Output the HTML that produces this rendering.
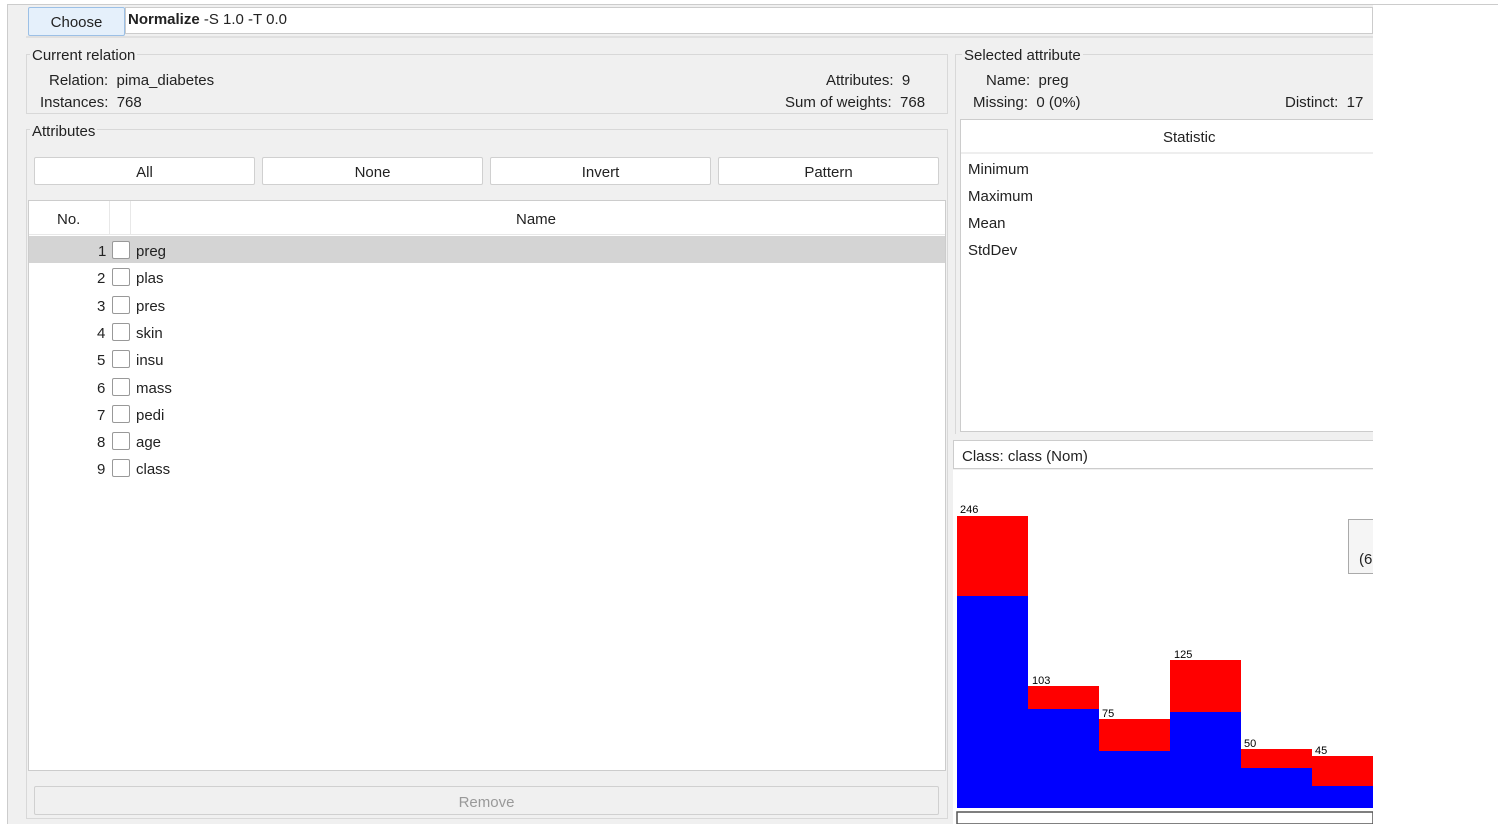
<!DOCTYPE html>
<html><head><style>
*{margin:0;padding:0;box-sizing:border-box}
body{width:1498px;height:824px;background:#fff;position:relative;overflow:hidden;font-family:"Liberation Sans",sans-serif;font-size:15px;color:#222}
.a{position:absolute}
.t{position:absolute;white-space:nowrap;transform:translateY(2px)}
.btn{position:absolute;background:#fff;border:1px solid #d0d0d0;border-radius:2px;text-align:center;line-height:29px}
.leg{position:absolute;border-top:1px solid #d8d8d8}
</style></head><body>
<div class="a" style="left:7px;top:4px;width:1366px;height:820px;background:#f0f0f0;border-left:1px solid #ccc;border-top:1px solid #ccc"></div>
<div class="a" style="left:1373px;top:4px;width:125px;height:1px;background:#ccc"></div>
<div class="btn" style="left:28px;top:7px;width:97px;height:29px;background:#e5f0fb;border-color:#9cc0e6;line-height:30px">Choose</div>
<div class="a" style="left:125px;top:7px;width:1248px;height:27px;background:#fff;border:1px solid #ccc"></div>
<div class="t" style="left:128px;top:9px;font-size:15px"><b>Normalize</b> -S 1.0 -T 0.0</div>
<div class="a" style="left:26px;top:36px;width:1347px;height:2px;background:#e0e0e0"></div>
<!-- current relation -->
<div class="leg" style="left:26px;top:54px;width:922px"></div>
<div class="a" style="left:26px;top:54px;width:922px;height:60px;border:1px solid #d8d8d8;border-top:none"></div>
<div class="t" style="left:30px;top:45px;background:#f0f0f0;padding:0 2px">Current relation</div>
<div class="t" style="left:49px;top:70px">Relation:&nbsp; pima_diabetes</div>
<div class="t" style="left:40px;top:92px">Instances:&nbsp; 768</div>
<div class="t" style="left:826px;top:70px">Attributes:&nbsp; 9</div>
<div class="t" style="left:785px;top:92px">Sum of weights:&nbsp; 768</div>
<!-- attributes -->
<div class="a" style="left:26px;top:129px;width:922px;height:690px;border:1px solid #d8d8d8"></div>
<div class="t" style="left:30px;top:121px;background:#f0f0f0;padding:0 2px">Attributes</div>
<div class="btn" style="left:34px;top:157px;width:221px;height:28px">All</div>
<div class="btn" style="left:262px;top:157px;width:221px;height:28px">None</div>
<div class="btn" style="left:490px;top:157px;width:221px;height:28px">Invert</div>
<div class="btn" style="left:718px;top:157px;width:221px;height:28px">Pattern</div>
<div class="a" style="left:28px;top:200px;width:918px;height:571px;background:#fff;border:1px solid #ccc"></div>
<div class="a" style="left:29px;top:234px;width:916px;height:1px;background:#e8e8e8"></div>
<div class="a" style="left:109px;top:201px;width:1px;height:33px;background:#e8e8e8"></div>
<div class="a" style="left:130px;top:201px;width:1px;height:33px;background:#e8e8e8"></div>
<div class="t" style="left:57px;top:209px">No.</div>
<div class="t" style="left:516px;top:209px">Name</div>
<div class="a" style="left:29px;top:236px;width:916px;height:27px;background:#d4d4d4"></div>
<div id="rows"></div>
<div class="btn" style="left:34px;top:786px;width:905px;height:29px;background:#f0f0f0;color:#999;line-height:31px">Remove</div>
<!-- selected attribute -->
<div class="leg" style="left:955px;top:54px;width:418px"></div>
<div class="a" style="left:955px;top:54px;width:1px;height:380px;background:#d8d8d8"></div>
<div class="t" style="left:962px;top:45px;background:#f0f0f0;padding:0 2px">Selected attribute</div>
<div class="t" style="left:986px;top:70px">Name:&nbsp; preg</div>
<div class="t" style="left:973px;top:92px">Missing:&nbsp; 0 (0%)</div>
<div class="t" style="left:1285px;top:92px">Distinct:&nbsp; 17</div>
<div class="a" style="left:960px;top:119px;width:413px;height:313px;background:#fff;border:1px solid #ccc;border-right:none"></div>
<div class="a" style="left:961px;top:152px;width:412px;height:2px;background:#eee"></div>
<div class="t" style="left:1163px;top:127px">Statistic</div>
<div class="t" style="left:968px;top:159px">Minimum</div>
<div class="t" style="left:968px;top:186px">Maximum</div>
<div class="t" style="left:968px;top:213px">Mean</div>
<div class="t" style="left:968px;top:240px">StdDev</div>
<!-- class -->
<div class="a" style="left:953px;top:440px;width:420px;height:29px;background:#fff;border:1px solid #ccc;border-right:none"></div>
<div class="t" style="left:962px;top:446px">Class: class (Nom)</div>
<div class="a" style="left:953px;top:470px;width:420px;height:354px;background:#fff"></div>
<div class="a" style="left:1348px;top:519px;width:25px;height:55px;background:#f5f5f5;border:1px solid #aaa;border-right:none"></div>
<div class="t" style="left:1359px;top:549px">(6</div>
<svg class="a" style="left:0;top:0" width="1373" height="824">
<g font-family="Liberation Sans" font-size="11" fill="#000">
<rect x="957" y="516" width="71" height="80" fill="#f00"/><rect x="957" y="596" width="71" height="212" fill="#00f"/>
<rect x="1028" y="686" width="71" height="23" fill="#f00"/><rect x="1028" y="709" width="71" height="99" fill="#00f"/>
<rect x="1099" y="719" width="71" height="32" fill="#f00"/><rect x="1099" y="751" width="71" height="57" fill="#00f"/>
<rect x="1170" y="660" width="71" height="52" fill="#f00"/><rect x="1170" y="712" width="71" height="96" fill="#00f"/>
<rect x="1241" y="749" width="71" height="19" fill="#f00"/><rect x="1241" y="768" width="71" height="40" fill="#00f"/>
<rect x="1312" y="756" width="61" height="30" fill="#f00"/><rect x="1312" y="786" width="61" height="22" fill="#00f"/>
<text x="960" y="513">246</text><text x="1032" y="684">103</text><text x="1102" y="717">75</text>
<text x="1174" y="658">125</text><text x="1244" y="747">50</text><text x="1315" y="754">45</text>
<rect x="957" y="812" width="416" height="12" fill="none" stroke="#555" stroke-width="1.5"/>
</g></svg>
<script>
var n=["preg","plas","pres","skin","insu","mass","pedi","age","class"],h="";
for(var i=0;i<9;i++){var y=241+i*27.3;
h+='<div class="t" style="left:'+(i==0?98:97)+'px;top:'+y+'px">'+(i+1)+'</div><div class="a" style="left:112px;top:'+(y)+'px;width:18px;height:18px;background:#fff;border:1px solid #999;border-radius:2px"></div><div class="t" style="left:136px;top:'+y+'px">'+n[i]+'</div>';}
document.getElementById("rows").innerHTML=h;
</script>
</body></html>
